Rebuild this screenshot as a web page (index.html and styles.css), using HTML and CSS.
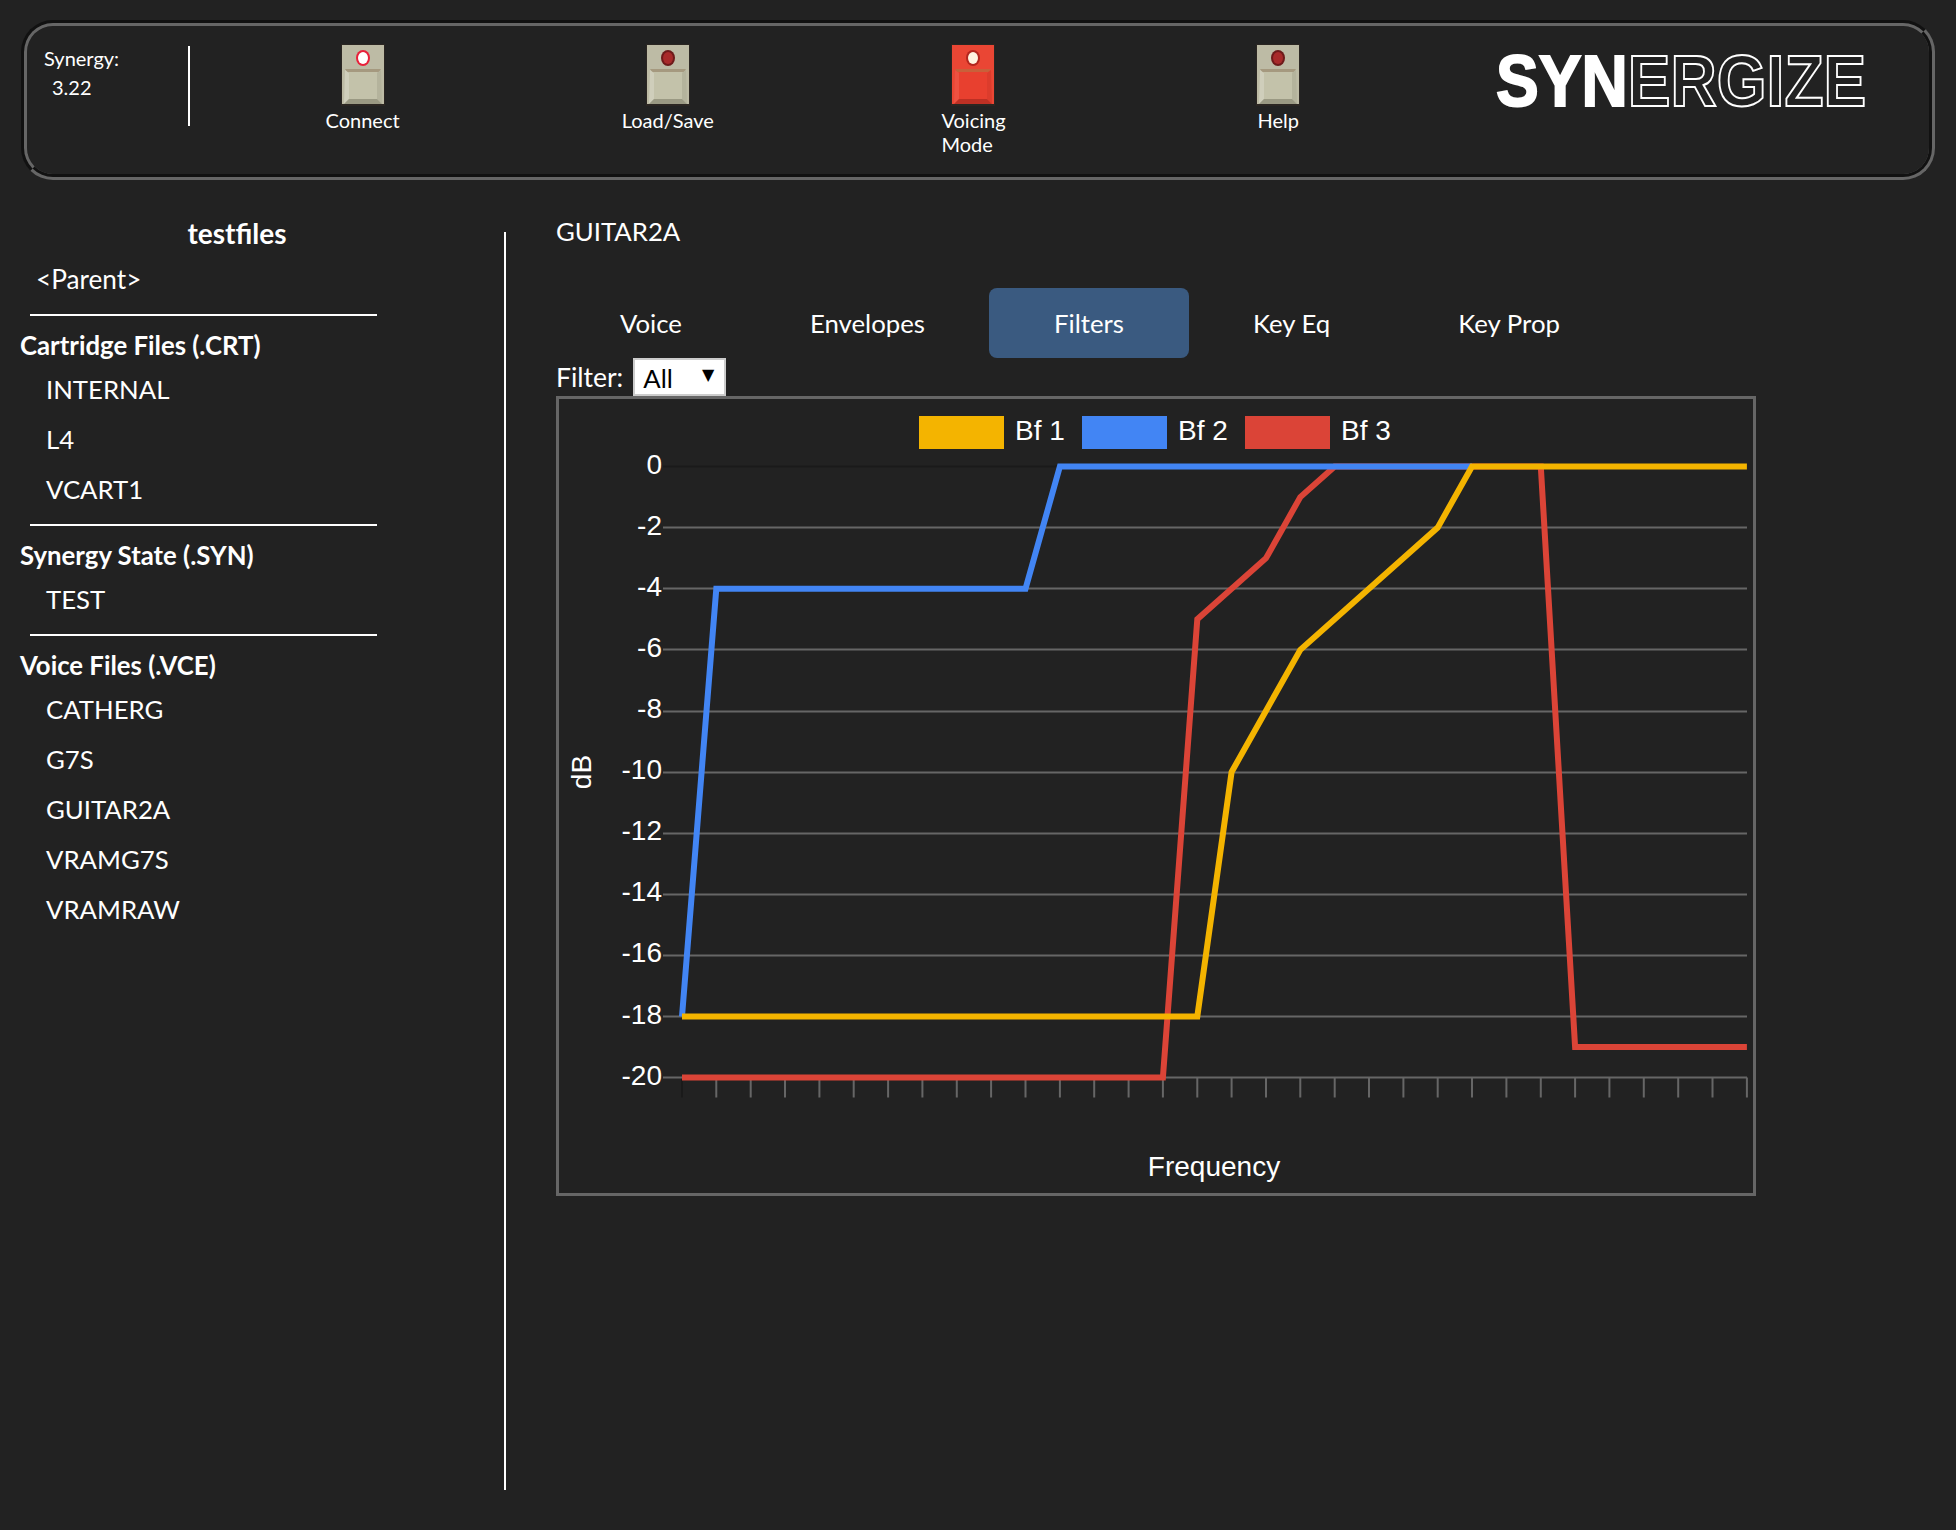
FILE: index.html
```html
<!DOCTYPE html>
<html>
<head>
	<meta charset="UTF-8">
	<title>Synergize</title>
	<link rel="stylesheet" href="styles.css">
</head>
<body>
	<svg class="defs" width="0" height="0">
		<symbol id="key" viewBox="0 0 44 62">
			<rect x="0" y="0" width="44" height="62" class="key-edge" />
			<rect x="1" y="1" width="42" height="59" class="key-top" />
			<path d="M4 25H40L38 28H6Z" class="key-line" />
			<path d="M4 26L8 29V55L3 60Z" class="key-bevel-l" />
			<path d="M40 26L36 29V55L41 60Z" class="key-bevel-r" />
			<path d="M8 55H36L41 60H3Z" class="key-bevel-b" />
			<rect x="8" y="28" width="28" height="27" class="key-face" />
			<ellipse cx="22" cy="14" rx="7" ry="8" class="key-ring" />
			<ellipse cx="22" cy="14" rx="5" ry="6" class="key-led" />
		</symbol>
	</svg>

	<header class="top-bar">
		<div class="version">
			<div>Synergy:</div>
			<div class="version-num">3.22</div>
		</div>
		<nav class="keys">
			<div class="key key-on">
				<svg class="key-img"><use href="#key" /></svg>
				<div>Connect</div>
			</div>
			<div class="key">
				<svg class="key-img"><use href="#key" /></svg>
				<div>Load/Save</div>
			</div>
			<div class="key key-red">
				<svg class="key-img"><use href="#key" /></svg>
				<div class="key-label-wrap">Voicing Mode</div>
			</div>
			<div class="key">
				<svg class="key-img"><use href="#key" /></svg>
				<div>Help</div>
			</div>
		</nav>
		<div class="logo"><span class="logo-text">SYN<span class="logo-outline">ERGIZE</span></span></div>
	</header>

	<div class="content">
		<aside class="sidebar">
			<div class="dir-name">testfiles</div>
			<div class="parent">&lt;Parent&gt;</div>
			<hr>
			<div class="group-title">Cartridge Files (.CRT)</div>
			<ul class="file-list">
				<li>INTERNAL</li>
				<li>L4</li>
				<li>VCART1</li>
			</ul>
			<hr>
			<div class="group-title">Synergy State (.SYN)</div>
			<ul class="file-list">
				<li>TEST</li>
			</ul>
			<hr>
			<div class="group-title">Voice Files (.VCE)</div>
			<ul class="file-list">
				<li>CATHERG</li>
				<li>G7S</li>
				<li>GUITAR2A</li>
				<li>VRAMG7S</li>
				<li>VRAMRAW</li>
			</ul>
		</aside>

		<main class="main">
			<div class="voice-name">GUITAR2A</div>
			<div class="tabs">
				<div class="tab">Voice</div>
				<div class="tab">Envelopes</div>
				<div class="tab tab-active">Filters</div>
				<div class="tab">Key Eq</div>
				<div class="tab">Key Prop</div>
			</div>
			<div class="filter-row">
				<span class="filter-label">Filter:</span>
				<div class="select">All<span class="select-arrow">▼</span></div>
			</div>
			<div class="chart">
				<!-- viewBox is in page coordinates -->
				<svg class="chart-svg" viewBox="559 399 1194 794" width="1194" height="794">
					<rect x="919" y="416" width="85" height="33" fill="#f4b400" />
					<text x="1015" y="440" class="chart-text">Bf 1</text>
					<rect x="1082" y="416" width="85" height="33" fill="#4285f4" />
					<text x="1178" y="440" class="chart-text">Bf 2</text>
					<rect x="1245" y="416" width="85" height="33" fill="#db4437" />
					<text x="1341" y="440" class="chart-text">Bf 3</text>

					<g transform="translate(0 .5)">
						<path class="grid-zero" d="M663 466H1747M682 1077V1097" />
						<path class="grid" d="M663 527H1747M663 588H1747M663 649H1747M663 711H1747M663 772H1747M663 833H1747M663 894H1747M663 955H1747M663 1016H1747M663 1077H1747" />
						<path class="grid" d="M716.3 1077v20M750.7 1077v20M785 1077v20M819.4 1077v20M853.7 1077v20M888.1 1077v20M922.4 1077v20M956.8 1077v20M991.1 1077v20M1025.5 1077v20M1059.9 1077v20M1094.2 1077v20M1128.6 1077v20M1162.9 1077v20M1197.3 1077v20M1231.6 1077v20M1266 1077v20M1300.3 1077v20M1334.7 1077v20M1369 1077v20M1403.4 1077v20M1437.7 1077v20M1472 1077v20M1506.4 1077v20M1540.8 1077v20M1575.1 1077v20M1609.4 1077v20M1643.8 1077v20M1678.2 1077v20M1712.5 1077v20M1746.9 1077v20" />
					</g>

					<g class="chart-text y-labels">
						<text x="662" y="474">0</text>
						<text x="662" y="535">-2</text>
						<text x="662" y="596">-4</text>
						<text x="662" y="657">-6</text>
						<text x="662" y="718">-8</text>
						<text x="662" y="779">-10</text>
						<text x="662" y="840">-12</text>
						<text x="662" y="901">-14</text>
						<text x="662" y="962">-16</text>
						<text x="662" y="1024">-18</text>
						<text x="662" y="1085">-20</text>
					</g>
					<text class="chart-text" transform="translate(591 772) rotate(-90)" text-anchor="middle">dB</text>
					<text class="chart-text" x="1214" y="1176" text-anchor="middle">Frequency</text>

					<g transform="translate(0 .5)">
						<polyline class="line" stroke="#db4437" points="682,1077 1162.9,1077 1197.3,618.8 1266,557.7 1300.3,496.6 1334.7,466 1540.8,466 1575.1,1046.5 1746.9,1046.5" />
						<polyline class="line" stroke="#4285f4" points="682,1016 716.3,588.2 1025.5,588.2 1059.9,466 1472,466" />
						<polyline class="line" stroke="#f4b400" points="682,1016 1197.3,1016 1231.6,771.5 1300.3,649.3 1437.7,527.1 1472,466 1746.9,466" />
					</g>
				</svg>
			</div>
		</main>
	</div>
</body>
</html>
```

FILE: styles.css
```css
body {
	margin: 0;
	padding: 0;
	background-color: #222;
	color: #fff;
	font-family: Lato, sans-serif;
}
.defs {
	position: absolute;
}

/* top bar */
.top-bar {
	display: flex;
	box-sizing: border-box;
	width: 1914px;
	height: 160px;
	margin: 20px 0 0 21px;
	border: 6px groove #666;
	border-radius: 32px;
	font-size: 20px;
	line-height: 24px;
}
.version {
	box-sizing: border-box;
	width: 163px;
	height: 80px;
	margin-top: 20px;
	padding: 0 0 0 17px;
	border-right: 2px solid #fff;
}
.version-num {
	margin: 5px 0 0 8px;
}
.keys {
	display: flex;
	margin-left: 20px;
}
.key {
	display: flex;
	flex-direction: column;
	align-items: center;
	width: 305.2px;
	padding-top: 18px;
	--key-top: #bdbba5;
	--key-face: #c3c2aa;
	--key-line: #a5997f;
	--key-l: #cfcebb;
	--key-r: #b4b39c;
	--key-b: #9a9983;
	--key-ring: #6e1a1a;
	--key-led: #a82a2a;
}
.key-img {
	display: block;
	width: 44px;
	height: 62px;
	margin-bottom: 2px;
}
.key-on {
	--key-ring: #e8203a;
	--key-led: #fff;
}
.key-red {
	--key-top: #ea4634;
	--key-face: #e8402f;
	--key-line: #c8603a;
	--key-l: #ee5141;
	--key-r: #dc3c2c;
	--key-b: #bd3024;
	--key-ring: #b3261e;
	--key-led: #fff3e0;
}
.key-edge { fill: #2b2622; }
.key-top { fill: var(--key-top); }
.key-face { fill: var(--key-face); }
.key-line { fill: var(--key-line); }
.key-bevel-l { fill: var(--key-l); }
.key-bevel-r { fill: var(--key-r); }
.key-bevel-b { fill: var(--key-b); }
.key-ring { fill: var(--key-ring); }
.key-led { fill: var(--key-led); }
.key-label-wrap {
	width: 63px;
}
.logo {
	margin-left: 65px;
	padding-top: 20px;
	font-family: "Liberation Sans", Arial, sans-serif;
	font-size: 72px;
	font-weight: bold;
	line-height: 70px;
	white-space: nowrap;
	-webkit-text-stroke: 2px #fff;
}
.logo-text {
	display: inline-block;
	transform: scaleX(.89);
	transform-origin: left center;
}
.logo-outline {
	color: #222;
	-webkit-text-stroke: 2px #fff;
}

/* layout */
.content {
	display: flex;
}
.sidebar {
	box-sizing: border-box;
	width: 504px;
	padding: 33px 0 0 20px;
	font-size: 25.75px;
	line-height: 50px;
}
.dir-name {
	width: 434px;
	text-align: center;
	font-size: 28px;
	font-weight: bold;
	line-height: 40px;
}
.parent {
	padding: 1px 0 0 16px;
	font-size: 26.2px;
	line-height: 50px;
}
.sidebar hr {
	width: 347px;
	height: 2px;
	margin: 10px 0 0 10px;
	border: none;
	background-color: #fff;
}
.group-title {
	margin-top: 10px;
	font-weight: bold;
	line-height: 38px;
}
.file-list {
	margin: 0;
	padding: 0 0 0 26px;
	list-style: none;
}
.file-list li {
	height: 50px;
}
.main {
	box-sizing: border-box;
	margin-top: 52px;
	height: 1258px;
	padding-left: 50px;
	border-left: 2px solid #fff;
	font-size: 25.75px;
}
.voice-name {
	margin-top: -1px;
	line-height: 0;
}

/* tabs */
.tabs {
	display: flex;
	margin-top: 57px;
}
.tab {
	padding: 0 64px;
	height: 70px;
	line-height: 70px;
	border-radius: 8px;
}
.tab-active {
	padding: 0 65px;
	background-color: #3a5a80;
}
.filter-row {
	display: flex;
	align-items: center;
	gap: 10px;
	height: 38px;
}
.filter-label {
	font-size: 26.5px;
}
.select {
	position: relative;
	box-sizing: border-box;
	width: 93px;
	height: 38px;
	padding-left: 8px;
	border: 2px solid #ccc;
	background-color: #fff;
	color: #000;
	line-height: 36px;
}
.select-arrow {
	position: absolute;
	right: 10px;
	top: 0;
	font-family: "DejaVu Sans", sans-serif;
	font-size: 16px;
	line-height: 30px;
}

/* chart */
.chart {
	width: 1194px;
	height: 794px;
	border: 3px solid #666;
}
.chart-svg {
	display: block;
}
.chart-text {
	font-family: "Liberation Sans", Arial, sans-serif;
	font-size: 28px;
	fill: #fff;
}
.y-labels {
	text-anchor: end;
}
.grid {
	fill: none;
	stroke: #666;
	stroke-width: 2;
}
.grid-zero {
	fill: none;
	stroke: #1a1a1a;
	stroke-width: 2;
}
.line {
	fill: none;
	stroke-width: 6;
	stroke-linejoin: miter;
}
```
